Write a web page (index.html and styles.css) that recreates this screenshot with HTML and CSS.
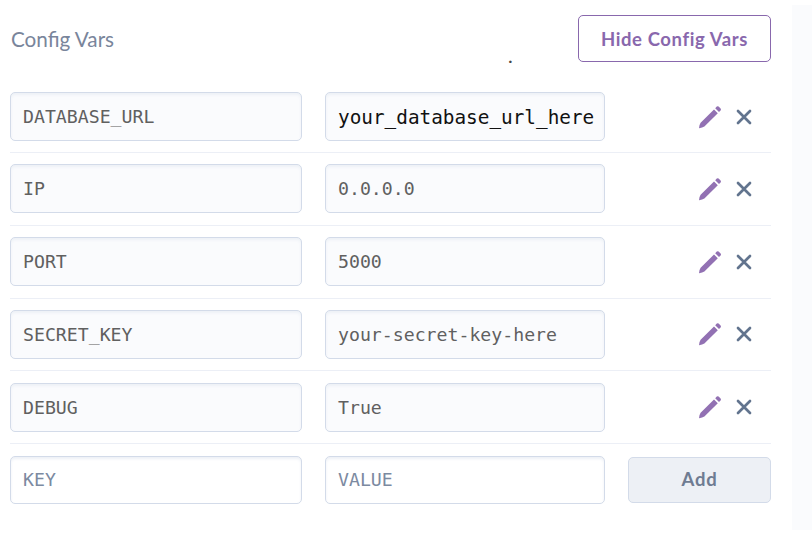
FILE: index.html
```
<!DOCTYPE html>
<html lang="en">
<head>
<meta charset="utf-8">
<title>Config Vars</title>
<link rel="stylesheet" href="styles.css">
</head>
<body>
<svg class="defs" aria-hidden="true">
  <symbol id="pencil" viewBox="0 0 24 24">
    <path d="M1 23.2Q1.2 19.8 2.6 17.8L16 4.4 19.8 8.2 6.4 21.6Q4.4 23 1 23.2ZM17.2 3.2 18.8 1.6Q19.7.8 20.6 1.6L22.6 3.6Q23.4 4.5 22.6 5.4L21 7Z" fill="#9271b3"/>
  </symbol>
  <symbol id="cross" viewBox="0 0 16 16">
    <path d="M2 2 14 14M14 2 2 14" fill="none" stroke="#62748e" stroke-width="2.7" stroke-linecap="round"/>
  </symbol>
</svg>
<main class="panel">
  <header class="head">
    <h1 class="title">Config Vars</h1>
    <span class="dot">.</span>
    <button class="toggle">Hide Config Vars</button>
  </header>
  <section class="rows">
    <div class="row"><div class="field">DATABASE_URL</div><div class="field strong">your_database_url_here</div><div class="actions"><svg class="pencil"><use href="#pencil"/></svg><svg class="cross"><use href="#cross"/></svg></div></div>
    <div class="row"><div class="field">IP</div><div class="field">0.0.0.0</div><div class="actions"><svg class="pencil"><use href="#pencil"/></svg><svg class="cross"><use href="#cross"/></svg></div></div>
    <div class="row"><div class="field">PORT</div><div class="field">5000</div><div class="actions"><svg class="pencil"><use href="#pencil"/></svg><svg class="cross"><use href="#cross"/></svg></div></div>
    <div class="row"><div class="field">SECRET_KEY</div><div class="field">your-secret-key-here</div><div class="actions"><svg class="pencil"><use href="#pencil"/></svg><svg class="cross"><use href="#cross"/></svg></div></div>
    <div class="row"><div class="field">DEBUG</div><div class="field">True</div><div class="actions"><svg class="pencil"><use href="#pencil"/></svg><svg class="cross"><use href="#cross"/></svg></div></div>
    <div class="row"><div class="field empty">KEY</div><div class="field empty">VALUE</div><button class="add">Add</button></div>
  </section>
</main>
<aside class="gutter"></aside>
</body>
</html>
```
FILE: styles.css
```
* { box-sizing: border-box; }
body {
  margin: 0;
  height: 552px;
  display: flex;
  background: #fff;
  font-family: Lato, sans-serif;
  overflow: hidden;
}
.defs { display: none; }
.panel { width: 792px; padding: 15px 21px 0 10px; }
.gutter { flex: 1; height: 525px; margin-top: 5px; background: #fafbfd; }
.head { display: flex; align-items: center; height: 47px; }
.title {
  flex: 1;
  margin: 0;
  font-size: 20.7px;
  line-height: 24px;
  padding-top: 1px;
  padding-left: 1px;
  font-weight: 400;
  color: #79859b;
}
.dot {
  width: 6px;
  margin-right: 64px;
  padding-top: 32px;
  font-size: 20px;
  line-height: 24px;
  color: #444;
}
.toggle {
  width: 193px;
  height: 47px;
  padding: 0;
  border: 1px solid #8968ad;
  border-radius: 5px;
  background: #fff;
  font: 700 18.5px Lato, sans-serif;
  letter-spacing: 0.6px;
  color: #8968ad;
}
.rows { padding-top: 19px; }
.row {
  display: grid;
  grid-template-columns: 292px 280px 143px;
  column-gap: 23px;
  align-items: center;
  height: 72.8px;
  border-bottom: 1.5px solid #eceff6;
}
.row:first-child { height: 72px; }
.row:last-child { height: 72px; border-bottom: 0; }
.row:last-child .field { height: 48px; line-height: 45px; }
.field {
  height: 49px;
  padding-left: 12px;
  border: 1.5px solid #d3dbe9;
  border-radius: 5px;
  background: #fafbfd;
  box-shadow: inset 0 2px 3px #edf0f6;
  font: 18.2px/47px "DejaVu Sans Mono", monospace;
  color: #606060;
  white-space: nowrap;
}
.strong { font-size: 19.35px; line-height: 49px; color: #111; }
.empty { background: #fff; color: #7c8aa1; }
.actions { display: flex; align-items: center; padding-left: 70px; }
.pencil { width: 24px; height: 24px; }
.cross { width: 16px; height: 16px; margin-left: 14px; }
.add {
  height: 46px;
  padding: 0 0 2px;
  border: 1.5px solid #d3dbe9;
  border-radius: 5px;
  background: #edf0f5;
  font: 700 18.5px Lato, sans-serif;
  letter-spacing: 0.7px;
  color: #6f7c92;
}
```
